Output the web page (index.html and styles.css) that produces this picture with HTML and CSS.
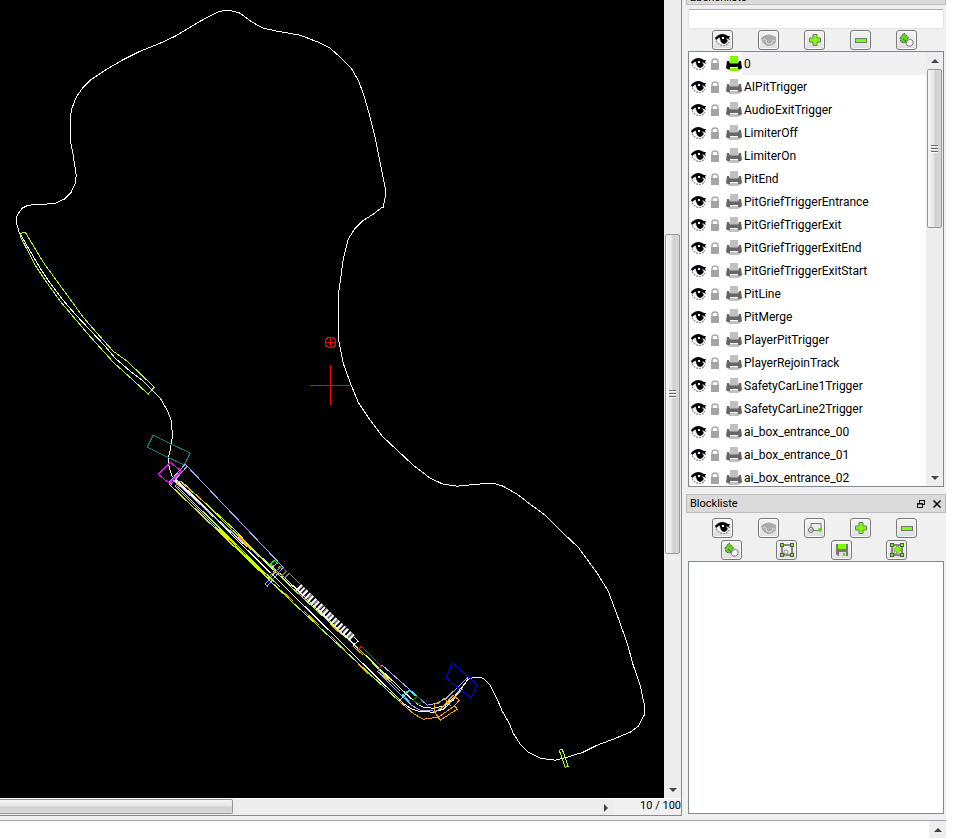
FILE: index.html
```html
<!DOCTYPE html>
<html lang="de">
<head>
<meta charset="utf-8">
<title>CAD</title>
<link rel="stylesheet" href="styles.css">
</head>
<body>
<svg class="sprite" aria-hidden="true">
  <symbol id="eye" viewBox="0 0 16 14">
    <path d="M1 6Q7 0 14 5Q15 8 11 12Q5 13 1 6Z" fill="#fff"/>
    <path d="M1 7.500Q4 12.500 8 12.500Q12 12.500 14 9" fill="none" stroke="#888" stroke-width="1.200" stroke-dasharray="2 1"/>
    <path d="M0 5L2 3Q7-1 13 3L15 3L14 5L15 7L13 6Q13 10 9 11Q5 10 5 5Q3 5 1 7Z" fill="#000"/>
    <path d="M2.500 6L5 4.500V8Z" fill="#ddd"/>
    <path d="M7 4h2v2H7z" fill="#fff"/><path d="M11.500 5l1.500 1-1 2z" fill="#fff"/>
  </symbol>
  <symbol id="eye-off" viewBox="0 0 16 14">
    <path d="M0 5Q6-1 13 3L15 4L15 9Q12 13 7 13Q3 12 1 8Z" fill="#aaa"/>
    <path d="M2 7Q4 5 5 7Q5 11 8 11Q12 11 12 7L14 8" fill="none" stroke="#ddd"/>
  </symbol>
  <symbol id="lock" viewBox="0 0 10 12">
    <path d="M2 6V3.500Q2 1 5 1Q8 1 8 3.500V6" fill="none" stroke="#aaa" stroke-width="1.500"/>
    <rect x="1" y="5" width="8" height="7" fill="#a4a4a4"/>
  </symbol>
  <symbol id="printer" viewBox="0 0 16 16">
    <path d="M4 0H12V8H4Z" fill="var(--paper)"/>
    <path d="M1 5H3L4 7.500H12L13 5H15L16 12L14 13.500H12V11H4V13.500H2L0 12Z" fill="var(--body)"/>
    <path d="M4 12H12L13 15H3Z" fill="var(--paper)"/>
  </symbol>
  <symbol id="plus" viewBox="0 0 14 14">
    <path d="M5 1.500H9V5H12.500V9H9V12.500H5V9H1.500V5H5Z" fill="#7cfc00" stroke="#777"/>
  </symbol>
  <symbol id="minus" viewBox="0 0 14 14">
    <rect x="1.500" y="5.500" width="11" height="4" fill="#7cfc00" stroke="#777"/>
  </symbol>
  <symbol id="edit" viewBox="0 0 14 14">
    <path d="M0 5L4 0L8 4L8 8L4 10L1 9Z" fill="#5fd41a" stroke="#555" stroke-dasharray="2 1"/>
    <path d="M3 6l5 4" stroke="#555"/>
    <path d="M7 8L10 6L13 8V11L11 13H8L6 11Z" fill="#fff" stroke="#777"/>
  </symbol>
  <symbol id="rename" viewBox="0 0 14 14">
    <path d="M3 8V2.500H13V8M4 9.500H12" fill="none" stroke="#777"/>
    <circle cx="3" cy="9" r="2.500" fill="#eee" stroke="#666"/><circle cx="12" cy="9" r="2" fill="#5fd41a"/>
    <path d="M2 9h4" stroke="#777"/>
  </symbol>
  <symbol id="frame" viewBox="0 0 14 14">
    <path d="M2 2H12V12H2Z" fill="#eee" stroke="#666" stroke-width="1.500"/>
    <path d="M0 0h4v4H0zM10 0h4v4h-4zM0 10h4v4H0zM10 10h4v4h-4z" fill="#555"/>
    <path d="M1 1h2v2H1zM11 1h2v2h-2zM1 11h2v2H1zM11 11h2v2h-2z" fill="#7cfc00"/>
    <circle cx="6" cy="9" r="2" fill="#fff" stroke="#888"/>
  </symbol>
  <symbol id="frame-plus" viewBox="0 0 14 14">
    <use href="#frame"/>
    <path d="M6 3H9V5H11V8H9V10H6V8H4V5H6Z" fill="#7cfc00" stroke="#777" stroke-width=".5"/>
  </symbol>
  <symbol id="save" viewBox="0 0 14 14">
    <path d="M1 1H13V13H3L1 11Z" fill="#777"/>
    <path d="M3 1H11V6H3Z" fill="#7cfc00"/><path d="M4 9H11V13H4Z" fill="#ddd"/><path d="M8 10h2v3H8z" fill="#5fd41a"/>
  </symbol>
</svg>

<main class="workspace">
  <section class="viewport">
    <svg class="drawing" viewBox="0 0 664 798" preserveAspectRatio="xMinYMin meet" role="img" aria-label="Zeichnung">
      <g transform="translate(.2 .2)">
        <path class="white" d="M228 10L220 11L213 14L200 21L190 27L175 36L160 43L140 51L122 60L105 70L90 80L83 87L76 97L71 110L70 125V140L73 155L76 175L75 183L71 192L64 199L55 203L45 204L28 205L22 208L17 215L16 222L19 232L30 251L40 268L50 283L62 299L75 314L90 330L105 346L115 358L130 371L142 380L153 391L160 398L167 410L171 420L172 432V438L170 450L168 458L169 467L172 476L403 703L410 708L418 711L433 712L443 709L453 700L460 690L468 679L475 677L483 678L490 685L497 699L502 711L509 723L513 733L520 744L528 752L540 758L555 760L567 757L583 752L597 745L613 739L630 732L638 726L644 715V704L640 685L633 665L627 643L617 615L608 591L597 573L578 547L563 533L545 515L530 504L517 494L503 486L493 483L477 484L457 486L443 484L430 478L413 465L397 450L382 436L370 420L358 402L351 385L343 363L339 343L338 336V296L341 274L343 259L348 239L355 228L362 221L373 214L382 207H383L385 197V188L382 173L375 138L368 110L363 93L358 80L351 68L340 57L330 48L318 42L300 35L277 31L263 28L252 22L240 13L233 11Z"/>
        <path class="white" d="M172 478L210 512L240 541L260 556L285 578L360 650L417 704L423 707L433 708L443 706L453 698L460 689L468 679"/>
        <path class="white" d="M174 477L220 522L250 548L290 585L296 588"/>
        <path class="lime" d="M25 232L43 262L67 295L83 317L103 340L113 351L127 361L154 387L148 394L133 380L113 362L87 333L60 301L47 283L35 265L20 236L21 233Z"/>
        <path class="teal" d="M153 435L190 453L184 465L147 447Z"/>
        <path class="magenta" d="M170 462L181 471L169 483L158 474Z"/>
        <path class="violet" d="M185 464L283 567L267 586L265 584L280 566M185 464L169 482L171 484L187 466M173 480L213 516L252 550L285 578M377 672L382 665L427 705L437 703L446 698L468 677M377 671L411 705L420 710L436 711L450 702L462 689"/>
        <path class="lime" d="M181 482L202 500L235 533L260 556L290 586L362 652L400 691M169 484L290 600L399 701L408 691M177 486L260 568L280 587"/>
        <path class="yellow" d="M169 484L268 578L275 570M175 486L210 521L265 574M181 481L235 530L255 552"/>
        <path class="orange" d="M182 482L178 481L175 486M184 484L204 502M233 530L251 549M281 590L293 601M304 611L319 625M331 636L345 650M358 664L372 677M295 590L305 600M330 624L342 635M353 646L363 655M379 672L390 682M399 701L414 714L423 719L438 717L454 706L459 700L453 695L440 709M434 704V711L440 720L457 709L454 705M438 703L444 698L451 706"/>
        <path class="green" d="M270 564L274 560L277 563L273 566Z"/>
        <path class="olive" d="M277 570L281 566L286 571L281 576M275 571L270 575"/>
        <path class="grey" d="M284 578L289 573L300 584"/>
        <path class="pits-grey" d="M299 586L352 637"/>
        <path class="pits" d="M298 587L353 639"/>
        <path class="white" d="M353 645L358 641L354 637"/>
        <path class="red" d="M358 649L361 646L381 666L378 670"/>
        <path class="cyan" d="M402 695L409 690L417 697M403 695L411 704"/>
        <path class="darkgreen" d="M413 700L417 696L422 701L418 704Z"/>
        <path class="blue" d="M452 663L477 684L471 698L446 678Z"/>
        <path class="lime" d="M559 750L562 749L568 766L565 767Z"/>
        <path class="red" d="M310 385H350M330 365V405M325 342H336M330 337V348M328 337H333L335 340V345L333 347H328L325 345V340Z"/>
      </g>
    </svg>
    <div class="scroll scroll-v view-v"><span class="space-top"></span><span class="thumb"><i class="grip"></i></span><span class="space"></span><button class="arrow down" aria-label="Nach unten"></button></div>
    <div class="status">
      <div class="scroll-h"><span class="thumb-h"></span><button class="arrow right" aria-label="Nach rechts"></button></div>
      <span class="zoom">10 / 100</span>
    </div>
  </section>

  <aside class="docks">
    <h2 class="dock-title clipped">Ebenenliste</h2>
    <input class="filter" type="text" aria-label="Ebenen filtern">
    <div class="tools first">
      <button aria-label="Alle zeigen"><svg class="wide"><use href="#eye"/></svg></button>
      <button aria-label="Alle verbergen"><svg class="wide"><use href="#eye-off"/></svg></button>
      <button aria-label="Hinzufügen"><svg><use href="#plus"/></svg></button>
      <button aria-label="Entfernen"><svg><use href="#minus"/></svg></button>
      <button aria-label="Bearbeiten"><svg class="wide"><use href="#edit"/></svg></button>
    </div>
    <div class="layers">
      <ul id="layers"></ul>
      <div class="scroll scroll-v"><button class="arrow up" aria-label="Nach oben"></button><span class="thumb list-thumb"><i class="grip"></i></span><span class="space"></span><button class="arrow down" aria-label="Nach unten"></button></div>
    </div>
    <h2 class="dock-title">Blockliste
      <span class="window-buttons">
        <button aria-label="Lösen"><svg viewBox="0 0 10 10"><path d="M3.500 4V1.500H8.500V5.500H6M3 1.500H9M1.500 4.500H6.500V8.500H1.500ZM1 5H7" fill="none" stroke="#000"/></svg></button>
        <button aria-label="Schließen"><svg viewBox="0 0 10 10"><path d="M1.500 1.500L8.500 8.500M8.500 1.500L1.500 8.500" stroke="#000" stroke-width="1.500"/></svg></button>
      </span>
    </h2>
    <div class="tools second">
      <button aria-label="Alle zeigen"><svg class="wide"><use href="#eye"/></svg></button>
      <button aria-label="Alle verbergen"><svg class="wide"><use href="#eye-off"/></svg></button>
      <button aria-label="Umbenennen"><svg><use href="#rename"/></svg></button>
      <button aria-label="Hinzufügen"><svg><use href="#plus"/></svg></button>
      <button aria-label="Entfernen"><svg><use href="#minus"/></svg></button>
    </div>
    <div class="tools third">
      <button aria-label="Bearbeiten"><svg class="wide"><use href="#edit"/></svg></button>
      <button aria-label="Block erzeugen"><svg class="wide"><use href="#frame"/></svg></button>
      <button aria-label="Speichern"><svg><use href="#save"/></svg></button>
      <button aria-label="Block einfügen"><svg class="wide"><use href="#frame-plus"/></svg></button>
    </div>
    <div class="blocks"></div>
  </aside>
</main>
<footer class="console"><button class="arrow up" aria-label="Nach oben"></button></footer>
<script src="app.js"></script>
</body>
</html>
```
FILE: app.js
```js
const names = ["0", "AIPitTrigger", "AudioExitTrigger", "LimiterOff", "LimiterOn", "PitEnd",
  "PitGriefTriggerEntrance", "PitGriefTriggerExit", "PitGriefTriggerExitEnd", "PitGriefTriggerExitStart",
  "PitLine", "PitMerge", "PlayerPitTrigger", "PlayerRejoinTrack", "SafetyCarLine1Trigger",
  "SafetyCarLine2Trigger", "ai_box_entrance_00", "ai_box_entrance_01", "ai_box_entrance_02"];
document.getElementById("layers").innerHTML = names.map((name, i) =>
  `<li class="${i === 0 ? "active" : ""}">
    <button class="eye" aria-label="Sichtbar"><svg><use href="#eye"/></svg></button>
    <button class="lock" aria-label="Gesperrt"><svg><use href="#lock"/></svg></button>
    <button class="print" aria-label="Drucken"><svg><use href="#printer"/></svg></button>
    <span class="name">${name}</span>
  </li>`).join("");
```
FILE: styles.css
```css
* { box-sizing: border-box; }
body {
  margin: 0;
  height: 100vh;
  display: flex;
  flex-direction: column;
  padding-right: 10px;
  background: linear-gradient(#fff, #fff) right / 10px 100% no-repeat #f0f0f0;
  font: 12px/16px Roboto, "Noto Sans", sans-serif;
  color: #000;
  overflow: hidden;
}
button { padding: 0; border: 0; background: none; font: inherit; }
svg { display: block; }
.sprite { position: absolute; width: 0; height: 0; }

.workspace { flex: 1; min-height: 0; display: flex; gap: 4px; }
.viewport {
  flex: 1;
  min-width: 0;
  display: grid;
  grid-template: minmax(0, 1fr) 17px / minmax(0, 1fr) 17px;
  margin-bottom: 4px;
  border: solid #868791;
  border-width: 0 1px 1px 0;
}
.drawing { width: 100%; height: 100%; background: #000; shape-rendering: crispEdges; }
.drawing path { fill: none; stroke-width: 1; }
.drawing .white { stroke: #fff; }
.drawing .lime { stroke: #adff2f; }
.drawing .teal { stroke: #008080; }
.drawing .magenta { stroke: #f0f; }
.drawing .violet { stroke: #aaaaff; }
.drawing .yellow { stroke: #e8f000; }
.drawing .orange { stroke: #ffa500; }
.drawing .green { stroke: #0f0; }
.drawing .olive { stroke: #808000; }
.drawing .grey { stroke: #808080; }
.drawing .red { stroke: #f00; }
.drawing .cyan { stroke: #0ff; }
.drawing .darkgreen { stroke: #008000; }
.drawing .blue { stroke: #00f; }
.drawing .pits { stroke: #fff; stroke-width: 8; stroke-dasharray: 2 2; shape-rendering: auto; }
.drawing .pits-grey { stroke: #777; stroke-width: 6; stroke-dasharray: 3 4; }

.scroll-v { display: flex; flex-direction: column; width: 17px; background: #ededed; }
.space { flex: 1; }
.view-v .space-top { flex: 0 0 29%; }
.view-v .thumb { flex: 0 0 40%; margin-top: 3px; margin-bottom: 3px; height: 40%; }
.thumb {
  margin: 0 1px;
  border: 1px solid #979797;
  border-radius: 2px;
  background: linear-gradient(90deg, #f5f5f5, #e6e6e6 45%, #cfcfcf 55%, #d8d8d8);
  display: grid;
  place-items: center;
}
.list-thumb { flex: 0 0 159px; }
.grip { width: 7px; height: 8px; background: repeating-linear-gradient(#666 0 1px, #fff 1px 2px, #ddd 2px 3px); }
.arrow { height: 17px; width: 17px; flex: none; display: grid; place-items: center; }
.arrow::after { content: ""; border: solid transparent; }
.arrow.down::after { border-width: 4px 4px 0; border-top-color: #444; }
.arrow.up::after { border-width: 0 4px 4px; border-bottom-color: #444; }
.arrow.right::after { border-width: 4px 0 4px 4px; border-left-color: #444; }
.status { grid-column: 1 / -1; display: flex; justify-content: space-between; border-top: 1px solid #fff; }
.scroll-h { flex: 0 0 614px; display: flex; justify-content: space-between; background: #ededed; }
.thumb-h { width: 233px; height: 15px; border: 1px solid #979797; border-left: 0; border-radius: 0 2px 2px 0; background: linear-gradient(#f5f5f5, #e6e6e6 45%, #cfcfcf 55%, #d8d8d8); }
.zoom { line-height: 13px; font-size: 11px; white-space: nowrap; }

.docks { flex: 0 0 260px; min-width: 0; display: flex; flex-direction: column; }
.dock-title {
  flex: none;
  height: 19px;
  margin: 0;
  padding: 0 3px;
  display: flex;
  align-items: center;
  justify-content: space-between;
  font-size: 11px;
  line-height: 22px;
  font-weight: 400;
  border: 1px solid #bcbcbc;
  background: #dadada;
}
.dock-title.clipped { height: 5px; align-items: flex-end; line-height: 12px; border-top: 0; overflow: hidden; }
.window-buttons { display: flex; gap: 6px; }
.window-buttons svg { width: 10px; height: 10px; }
.filter { flex: none; width: auto; height: 20px; margin: 4px 2px 1px; padding: 0 4px; border: 1px solid #e0e3ea; border-top-color: #abadb3; border-radius: 2px; background: #fff; font: inherit; }
.tools { flex: none; display: flex; justify-content: space-between; height: 20px; }
.tools button { width: 21px; height: 20px; border: 1px solid #777; border-radius: 3px; background: linear-gradient(#f4f4f4, #ddd); display: grid; place-items: center; box-shadow: inset 0 0 0 1px #fafafa; }
.tools svg { width: 14px; height: 14px; }
.tools .wide { width: 16px; height: 14px; }
.first { margin: 0 29px 1px 26px; }
.second { margin: 5px 29px 2px 26px; }
.third { margin: 0 39px 1px 35px; }

.layers { flex: 437 1 0; min-height: 0; margin: 0 2px 7px; display: flex; border: 1px solid #828790; background: #fff; overflow: hidden; }
.layers ul { flex: 1; min-width: 0; margin: 0; padding: 0; list-style: none; }
.layers li { height: 23px; display: flex; align-items: center; padding-left: 2px; }
.layers svg { width: 100%; height: 100%; }
.eye { width: 16px; height: 14px; margin-right: 3px; }
.lock { width: 10px; height: 12px; margin-right: 6px; }
.print { width: 16px; height: 16px; --paper: #c0c0c0; --body: #666; }
.active .print { --paper: #7cfc00; --body: #000; }
.name { flex: 1; height: 23px; padding-left: 2px; line-height: 25px; }
.active .name { background: #f0f0f0; }
.blocks { flex: 252 1 0; min-height: 0; margin: 0 2px 6px; border: 1px solid #828790; background: #fff; }

.console { flex: none; height: 19px; display: flex; justify-content: flex-end; border-top: 1px solid #a0a0a8; background: #fff; }
.console .arrow { background: #ededed; }
```
